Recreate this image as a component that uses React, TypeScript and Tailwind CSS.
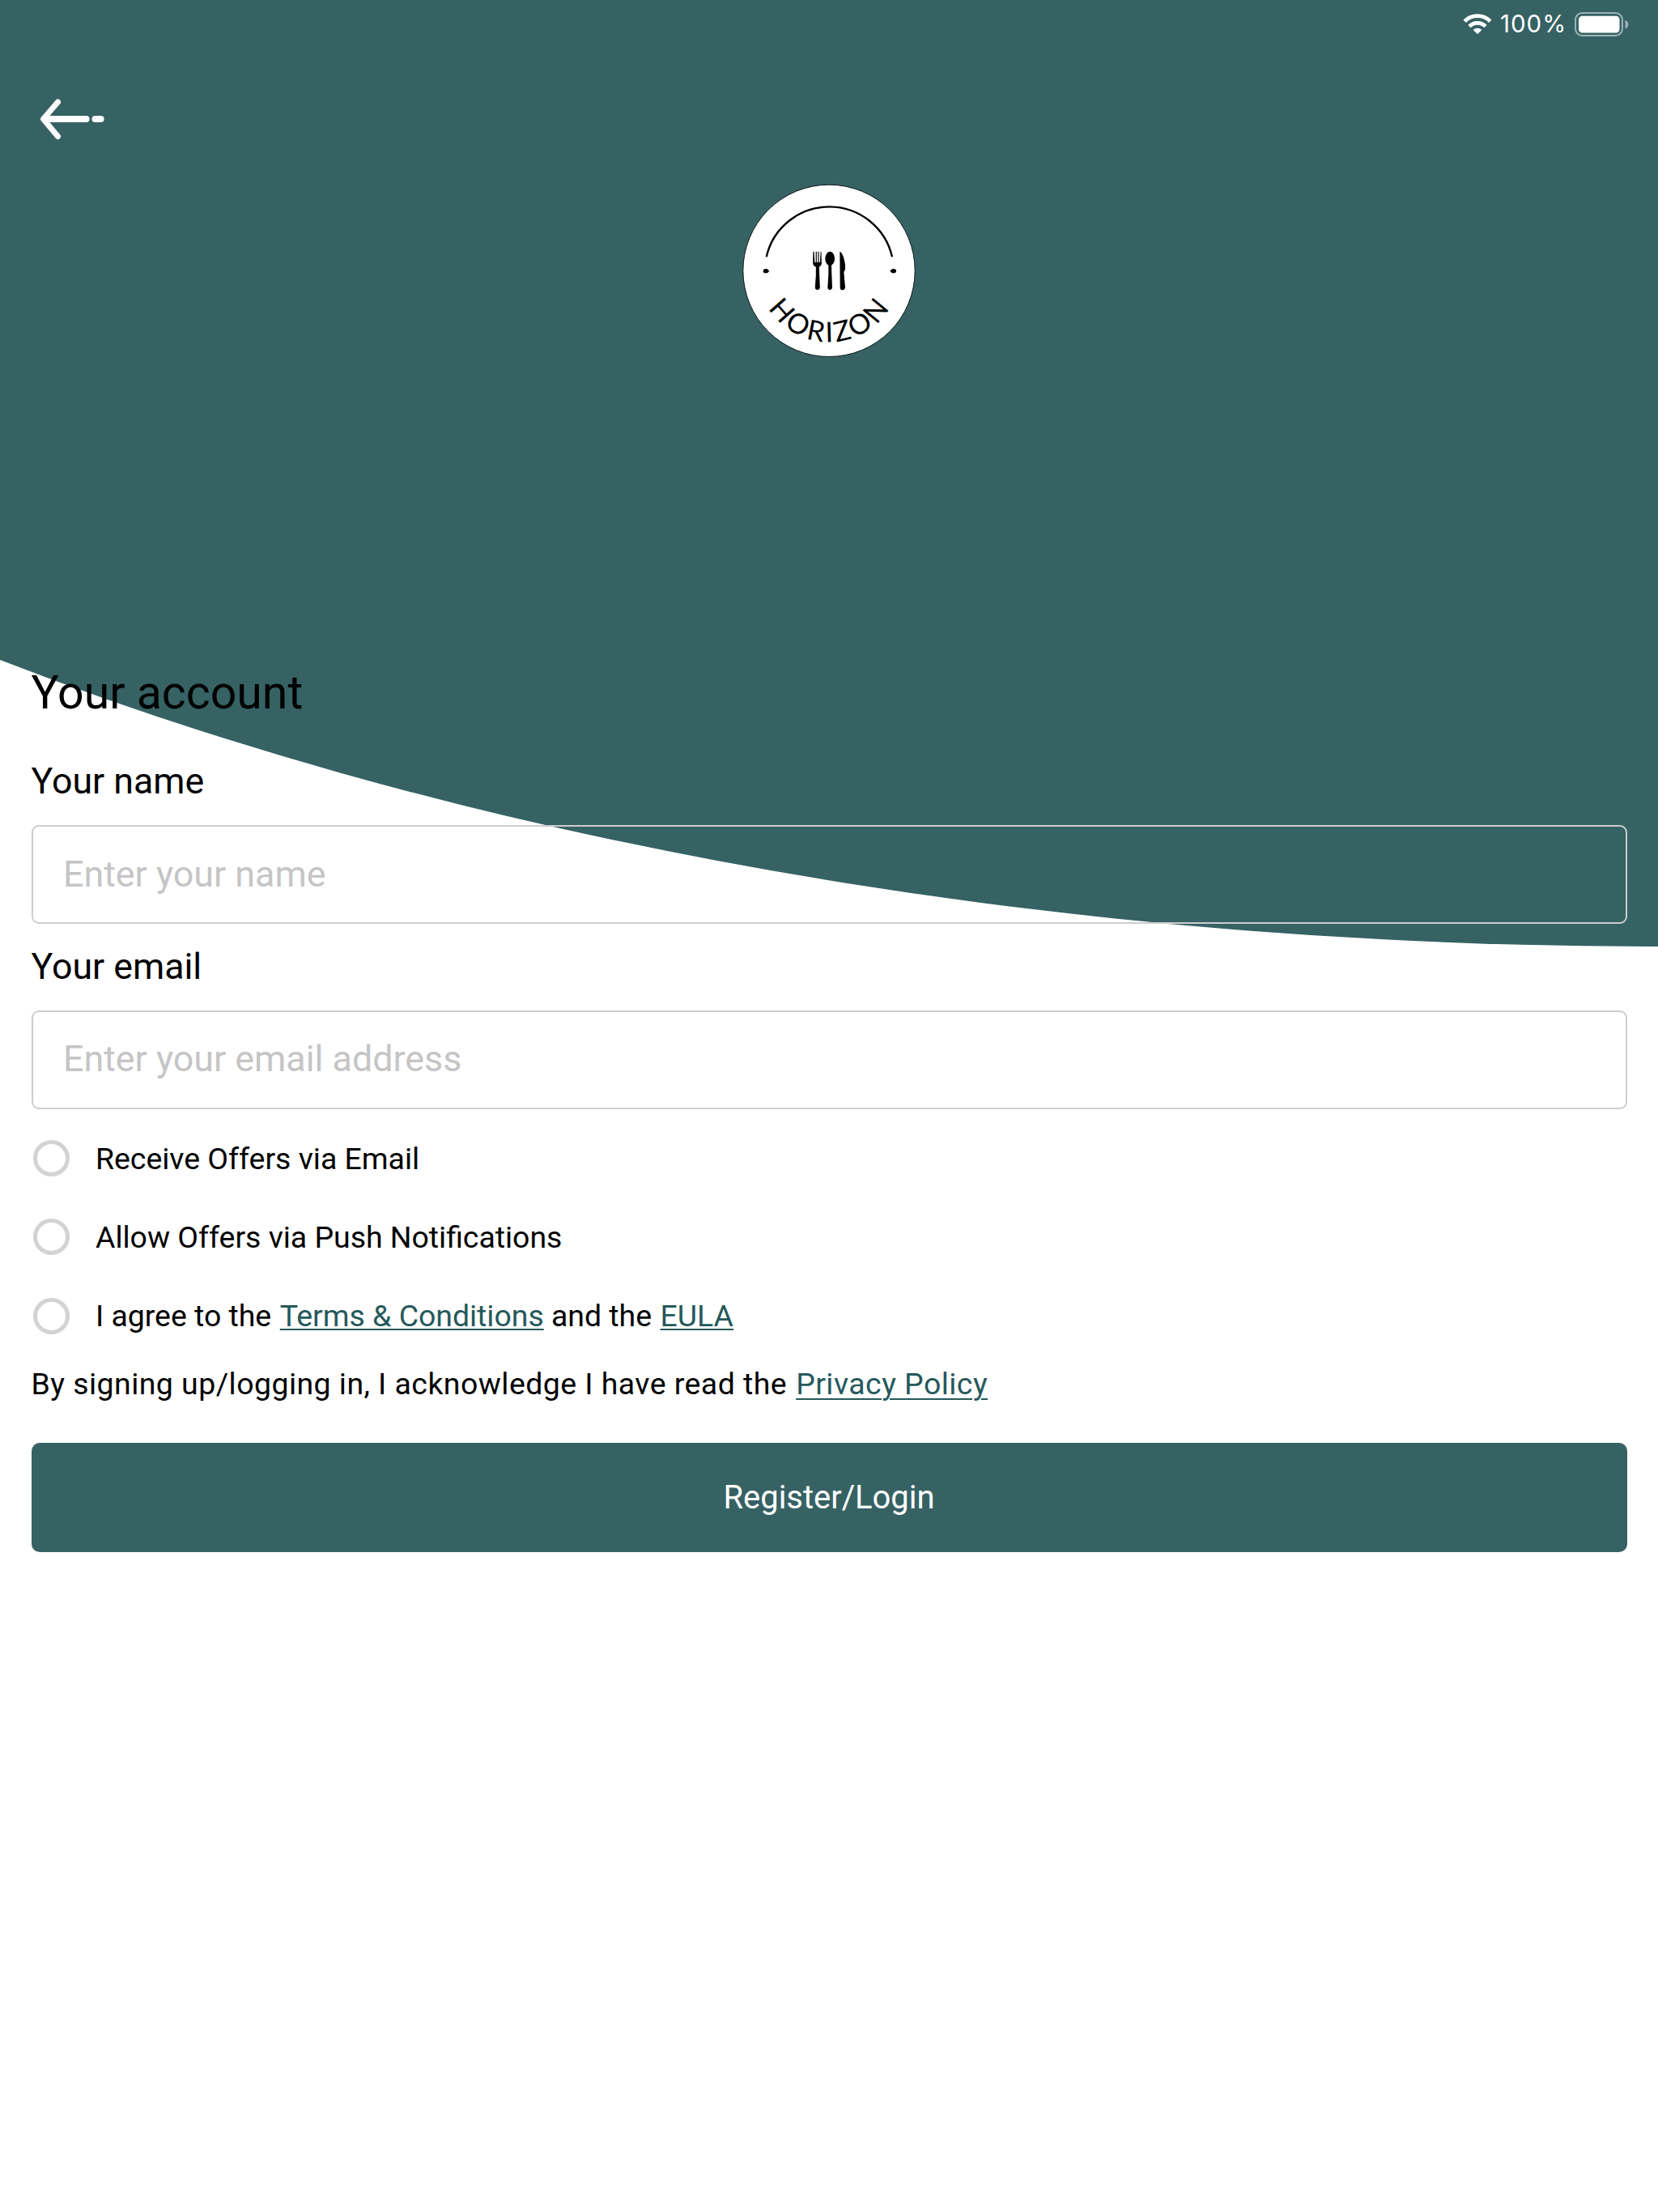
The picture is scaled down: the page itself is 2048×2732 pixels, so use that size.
import React from "react";

function WifiIcon() {
  return (
    <svg width="36" height="27" viewBox="0 0 36 27" fill="none" className="shrink-0">
      <path d="M2.2 10.2 A22.4 22.4 0 0 1 33.8 10.2" stroke="#fff" strokeWidth="4.8" />
      <path d="M8 16.6 A14 14 0 0 1 28 16.6" stroke="#fff" strokeWidth="4.6" />
      <path d="M12.7 21 A7.3 7.3 0 0 1 23.3 21 L18 26.2 Z" fill="#fff" />
    </svg>
  );
}

function BatteryIcon() {
  return (
    <svg width="68" height="30" viewBox="0 0 68 30" fill="none" className="shrink-0">
      <rect x="1" y="1" width="58" height="28" rx="8.5" stroke="#9db3b4" strokeWidth="2" />
      <rect x="5" y="4.7" width="50.5" height="20.8" rx="4.5" fill="#fff" />
      <path d="M62.5 10 C67.6 11.5 67.6 19 62.5 20.5 Z" fill="#9db3b4" />
    </svg>
  );
}

function BackArrow() {
  return (
    <svg width="80" height="52" viewBox="0 0 80 52" fill="none" stroke="#fff" strokeLinecap="round" strokeLinejoin="round">
      <path d="M22.5 4 L4.5 25 L22.5 46.5" strokeWidth="7" />
      <path d="M6 25 H57.5" strokeWidth="8" />
      <path d="M68.5 25 H75.5" strokeWidth="8" />
    </svg>
  );
}

function Logo() {
  return (
    <svg width="232" height="232" viewBox="0 0 696 696" fill="none">
      <circle cx="348" cy="349" r="318.5" fill="#fff" stroke="#0b1616" strokeWidth="3" />
      <path d="M116 298 A239 239 0 0 1 582 298" stroke="#000" strokeWidth="7" />
      <ellipse cx="114" cy="350" rx="10" ry="8" fill="#000" />
      <path d="M114 343 L128 350 L114 357 Z" fill="#000" />
      <ellipse cx="587" cy="350" rx="10" ry="8" fill="#000" />
      <path d="M587 343 L573 350 L587 357 Z" fill="#000" />
      <g fill="#000">
        <path d="M289 278 h3.5 l2.5 40 h4 v-40 h3.5 v40 h4.5 v-40 h3.5 v40 h4 l2.5 -40 h2.5 l1 44 c0 8 -6 11 -9 13 l1 30 l2 45 c0 13 -19 13 -18 0 l3 -45 v-30 c-4 -2 -11 -5 -11 -13 Z" />
        <path d="M352 278 c11 0 17 14 17 27 c0 13 -7 20 -12 24 l1 35 l2 46 c0 13 -18 13 -17 0 l3 -46 v-35 c-5 -4 -12 -11 -12 -24 c0 -13 7 -27 18 -27 Z" />
        <path d="M388 278 c8 2 16 20 20 48 v18 l-5 10 l5 56 c0 14 -20 14 -19 0 Z" />
      </g>
      <path id="logo-baseline" d="M84 349 A264 264 0 0 0 612 349" />
      <text
        fill="#000"
        fontSize="103"
        textAnchor="middle"
        letterSpacing="10"
        className="font-['Lato']"
      >
        <textPath href="#logo-baseline" startOffset="50.6%">
          HORIZON
        </textPath>
      </text>
    </svg>
  );
}

function Field({ label, placeholder }: { label: string; placeholder: string }) {
  return (
    <label className="block h-[228.5px]">
      <span className="block h-[80px] text-[44.7px] leading-[52px]">{label}</span>
      <input
        type="text"
        placeholder={placeholder}
        className="block h-[122px] w-full rounded-[9px] border-2 border-[#cdcdcd] bg-transparent px-[37.5px] pb-[2px] text-[44.8px] placeholder:text-[#c5c5c5] placeholder:opacity-100"
      />
    </label>
  );
}

function Option({ children }: { children: React.ReactNode }) {
  return (
    <div className="flex h-[97.3px] items-center gap-[32.5px] pl-[2px] text-[37.4px] leading-[46px]">
      <span className="size-[45px] shrink-0 rounded-full border-[5px] border-[#d3d3d3]" />
      <span>{children}</span>
    </div>
  );
}

function Link({ children }: { children: React.ReactNode }) {
  return (
    <a href="#" className="ml-[1.3px] text-[#25595b] underline decoration-[2.4px]">
      {children}
    </a>
  );
}

export default function App() {
  return (
    <div className="relative h-[2732px] w-[2048px] overflow-hidden bg-white font-['Roboto',sans-serif] text-black">
      <div className="absolute top-[-2457.5px] left-[-1402px] h-[3626px] w-[6900px] rounded-[50%] bg-[#366264]" />
      <div className="relative flex flex-col">
        <header className="flex h-[59px] items-center justify-end pr-[35px] text-white">
          <WifiIcon />
          <span className="ml-[10px] w-[92px] font-['Inter'] text-[29.5px] tracking-[1px]">100%</span>
          <BatteryIcon />
        </header>
        <nav className="h-[159px] pt-[63px] pl-[49px]">
          <BackArrow />
        </nav>
        <div className="flex h-[603px] justify-center">
          <Logo />
        </div>
        <main className="flex flex-col pr-[38.5px] pl-[38.5px]">
          <h1 className="h-[118px] pt-[1px] text-[57.2px] leading-[68px]">Your account</h1>
          <Field label="Your name" placeholder="Enter your name" />
          <Field label="Your email" placeholder="Enter your email address" />
          <div className="-mt-[14px] underline-offset-[3px]">
            <Option>Receive Offers via Email</Option>
            <Option>Allow Offers via Push Notifications</Option>
            <Option>
              I agree to the <Link>Terms &amp; Conditions</Link> and the <Link>EULA</Link>
            </Option>
          </div>
          <p className="h-[108.5px] pt-[12.5px] text-[37.4px] leading-[46px] tracking-[0.48px] underline-offset-[5px]">
            By signing up/logging in, I acknowledge I have read the <Link>Privacy Policy</Link>
          </p>
          <button className="block h-[135px] w-full rounded-[10px] bg-[#366264] text-[39.9px] text-white">
            Register/Login
          </button>
        </main>
      </div>
    </div>
  );
}
